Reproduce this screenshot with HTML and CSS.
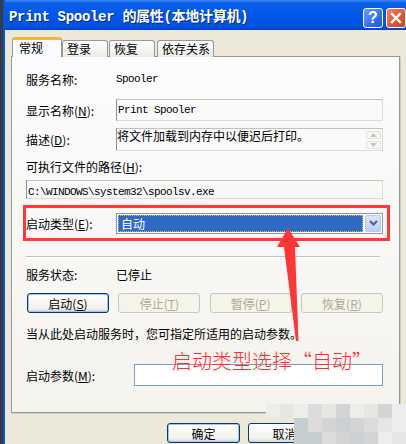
FILE: index.html
```html
<!DOCTYPE html>
<html lang="zh-CN">
<head>
  <meta charset="UTF-8">
  <title>Print Spooler 的属性(本地计算机)</title>
  <link rel="stylesheet" href="styles.css">
</head>
<body>

  <div class="screen">
    <div class="window">
      <div class="titlebar">
        <span class="title">Print Spooler 的属性(本地计算机)</span>
        <div class="tb-buttons">
          <span class="tb-btn help">?</span>
          <span class="tb-btn close">
            <svg width="12" height="12" viewBox="0 0 12 12"><path d="M2 2 L10 10 M10 2 L2 10" stroke="#fff" stroke-width="2.4" stroke-linecap="square"/></svg>
          </span>
        </div>
      </div>

      <div class="dialog">
        <div class="tabs">
          <div class="tab active">常规</div>
          <div class="tab">登录</div>
          <div class="tab">恢复</div>
          <div class="tab tab-wide">依存关系</div>
        </div>

        <div class="panel">
          <div class="row row-name">
            <span class="label">服务名称:</span>
            <span class="mono">Spooler</span>
          </div>
          <div class="row row-display">
            <span class="label">显示名称(<u>N</u>):</span>
            <div class="readonly field-display"><span class="mono">Print Spooler</span></div>
          </div>
          <div class="row row-desc">
            <span class="label">描述(<u>D</u>):</span>
            <div class="readonly field-desc">
              <span class="desc-text">将文件加载到内存中以便迟后打印。</span>
              <div class="spin">
                <span class="spin-btn"><svg width="7" height="4" viewBox="0 0 7 4"><path d="M0 4 L3.5 0 L7 4Z" fill="#c6c6c6"/></svg></span>
                <span class="spin-btn"><svg width="7" height="4" viewBox="0 0 7 4"><path d="M0 0 L3.5 4 L7 0Z" fill="#c6c6c6"/></svg></span>
              </div>
            </div>
          </div>
          <div class="row row-pathlabel">
            <span>可执行文件的路径(<u>H</u>):</span>
          </div>
          <div class="readonly pathbox"><span class="mono">C:\WINDOWS\system32\spoolsv.exe</span></div>

          <div class="row startup">
            <span class="label">启动类型(<u>E</u>):</span>
            <div class="select">
              <div class="select-value">自动</div>
              <div class="select-btn">
                <svg width="9" height="6" viewBox="0 0 9 6"><path d="M1 1 L4.5 4.5 L8 1" fill="none" stroke="#4d6185" stroke-width="2"/></svg>
              </div>
            </div>
          </div>

          <div class="separator"></div>

          <div class="row row-status">
            <span class="label">服务状态:</span>
            <span>已停止</span>
          </div>

          <div class="service-buttons">
            <button class="btn default">启动(<u>S</u>)</button>
            <button class="btn" disabled>停止(<u>T</u>)</button>
            <button class="btn" disabled>暂停(<u>P</u>)</button>
            <button class="btn" disabled>恢复(<u>R</u>)</button>
          </div>

          <div class="row hint">当从此处启动服务时，您可指定所适用的启动参数。</div>

          <div class="row row-param">
            <span class="label label-param">启动参数(<u>M</u>):</span>
            <input class="param-input" type="text">
          </div>
        </div>

        <div class="footer">
          <button class="btn default">确定</button>
          <button class="btn">取消</button>
        </div>
      </div>
    </div>

    <!-- annotation drawn over the screenshot -->
    <svg class="arrow" width="406" height="444" viewBox="0 0 406 444">
      <polygon points="288,228 300,247 295,247 298.5,341 296,341 284,247 277,247" fill="#ff3636"/>
    </svg>
    <div class="note">启动类型选择“自动”</div>

    <div class="mosaic">
      <span class="c1"></span><span class="c2"></span><span class="c1"></span><span class="c3"></span><span class="c2"></span><span class="c4"></span><span class="c1"></span><span class="c2"></span><span class="c4"></span><span class="c1"></span>
      <span class="c0"></span><span class="c0"></span><span class="c5"></span><span class="c3"></span><span class="c4"></span><span class="c6"></span><span class="c4"></span><span class="c3"></span><span class="c2"></span><span class="c1"></span>
      <span class="c0"></span><span class="c0"></span><span class="c5"></span><span class="c5"></span><span class="c3"></span><span class="c4"></span><span class="c6"></span><span class="c4"></span><span class="c1"></span><span class="c2"></span>
    </div>
  </div>

</body>
</html>
```

FILE: styles.css
```css
* {
  box-sizing: border-box;
}
body {
  margin: 0;
  background: #3b3b3b;
  font-family: "Noto Sans CJK SC", "Liberation Sans", sans-serif;
  font-size: 12px;
  color: #000;
}
u {
  text-decoration: underline;
}
.screen {
  position: relative;
  width: 406px;
  height: 444px;
  overflow: hidden;
  padding-left: 3px;
  background: #3b3b3b;
}
.window {
  height: 444px;
  border-left: 2px solid #0553e0;
  background: #ece9d8;
}
.titlebar {
  height: 30px;
  display: flex;
  justify-content: space-between;
  align-items: center;
  padding-left: 4px;
  background: linear-gradient(#3d88f6 0, #0a5fe8 3px, #0058ea 50%, #0052e0 85%, #0046cc 100%);
}
.title {
  font-family: "Liberation Mono", "Noto Sans CJK SC", monospace;
  font-weight: bold;
  font-size: 14px;
  letter-spacing: -0.3px;
  color: #fff;
  text-shadow: 1px 1px 0 #0a2a8a;
}
.tb-buttons {
  display: flex;
  gap: 3px;
  align-self: flex-start;
  margin-top: 8px;
}
.tb-btn {
  width: 20px;
  height: 20px;
  border: 1px solid #fff;
  border-radius: 3px;
  display: flex;
  align-items: center;
  justify-content: center;
  color: #fff;
  font-family: "Liberation Sans", sans-serif;
  font-weight: bold;
  font-size: 16px;
}
.help {
  background: linear-gradient(135deg, #6a9ffa, #2c68ec 70%, #2458d8);
}
.close {
  background: linear-gradient(135deg, #f0876a, #e0522e 60%, #c94420);
}
.dialog {
  padding: 7px 0 0 6px;
}
.tabs {
  display: flex;
  align-items: flex-end;
  height: 20px;
  margin-left: 1px;
  margin-bottom: -1px;
  position: relative;
  z-index: 1;
}
.tab {
  width: 46px;
  height: 17px;
  margin-right: 1px;
  padding-left: 4px;
  line-height: 15px;
  border: 1px solid #919b9c;
  border-bottom: none;
  border-radius: 3px 3px 0 0;
  background: linear-gradient(#ffffff, #ecebe6);
}
.tab-wide {
  width: 57px;
  margin-left: 1px;
}
.tab.active {
  width: 50px;
  height: 20px;
  margin-right: 0;
  padding-left: 6px;
  line-height: 16px;
  border-top: 3px solid #f5b53c;
  background: #fcfcfe;
}
.panel {
  width: 389px;
  height: 357px;
  padding: 0 16px 0 14px;
  border: 1px solid #919b9c;
  background: linear-gradient(#fcfcfe, #f4f3ee);
  box-shadow: 1px 1px 0 #d0cdc0;
}
.row {
  display: flex;
  align-items: center;
}
.label {
  width: 90px;
  flex-shrink: 0;
}
.mono {
  font-family: "Liberation Mono", monospace;
  font-size: 11px;
  letter-spacing: -0.6px;
}
.readonly {
  border: 1px solid #dedcd3;
  border-top-color: #c4c2b8;
  border-left-color: #8e8e8e;
}
.row-name {
  height: 16px;
  margin-top: 14px;
}
.row-display {
  height: 22px;
  margin-top: 12px;
}
.field-display {
  flex: 1;
  height: 22px;
  padding: 1px 0 0 1px;
  line-height: 13px;
}
.row-desc {
  height: 23px;
  margin-top: 7px;
}
.field-desc {
  flex: 1;
  height: 23px;
  display: flex;
  justify-content: space-between;
  padding-right: 1px;
}
.desc-text {
  line-height: 14px;
}
.spin {
  display: flex;
  flex-direction: column;
  gap: 2px;
  padding-top: 2px;
}
.spin-btn {
  width: 15px;
  height: 8px;
  display: flex;
  align-items: center;
  justify-content: center;
  border: 1px solid #e2e2dc;
  border-radius: 2px;
  background: #f6f6f3;
}
.row-pathlabel {
  height: 16px;
  margin-top: 7px;
}
.pathbox {
  height: 19px;
  margin-top: 6px;
  padding-left: 1px;
  line-height: 17px;
}
.startup {
  height: 36px;
  margin: 6px -7px 0 -3px;
  padding-right: 4px;
  border: 3px solid #ff3838;
}
.select {
  flex: 1;
  height: 21px;
  display: flex;
  align-items: center;
  padding: 1px;
  border: 1px solid #7f9db9;
  background: #fff;
}
.select-value {
  flex: 1;
  height: 17px;
  margin-right: 2px;
  padding-left: 2px;
  line-height: 15px;
  color: #fff;
  background: #316ac5;
  border: 1px dotted #e2b657;
}
.select-btn {
  width: 16px;
  height: 17px;
  display: flex;
  align-items: center;
  justify-content: center;
  border: 1px solid #b7c7ee;
  border-radius: 2px;
  background: linear-gradient(#dbe5fc, #bccdf6);
}
.separator {
  height: 2px;
  margin: 15px 3px 0 0;
  border-top: 1px solid #c5c2b2;
  border-bottom: 1px solid #fff;
}
.row-status {
  height: 16px;
  margin-top: 8px;
}
.service-buttons {
  display: flex;
  justify-content: space-between;
  margin-top: 11px;
  padding-left: 1px;
}
.btn {
  width: 82px;
  height: 20px;
  padding: 0;
  font-family: "Noto Sans CJK SC", "Liberation Sans", sans-serif;
  font-size: 12px;
  color: #000;
  border: 1px solid #003c74;
  border-radius: 3px;
  background: linear-gradient(#ffffff, #f2f1ea 80%, #d8d5c8);
}
.btn.default {
  box-shadow: inset 0 0 0 1px #a9c1ec;
}
.btn:disabled {
  color: #aca899;
  border-color: #c9c7ba;
  background: #f5f4ea;
}
.hint {
  height: 16px;
  margin-top: 12px;
}
.row-param {
  height: 22px;
  margin-top: 23px;
}
.label-param {
  width: 108px;
}
.param-input {
  flex: 1;
  height: 22px;
  border: 1px solid #7f9db9;
  background: #fff;
}
.footer {
  display: flex;
  gap: 8px;
  margin-top: 10px;
  padding-left: 156px;
}
.footer .btn {
  width: 73px;
}
.arrow {
  position: absolute;
  left: 0;
  top: 0;
}
.note {
  position: absolute;
  left: 172px;
  top: 349px;
  font-size: 20px;
  line-height: 24px;
  color: #ff2d2d;
  font-weight: 300;
}
.mosaic {
  position: absolute;
  left: 266px;
  top: 404px;
  display: grid;
  grid-template-columns: repeat(10, 14px);
  grid-auto-rows: 14px;
}
.mosaic .c0 { background: transparent; }
.mosaic .c1 { background: #ededec; }
.mosaic .c2 { background: #e6e6e5; }
.mosaic .c3 { background: #dcdcdc; }
.mosaic .c4 { background: #d4d4d4; }
.mosaic .c5 { background: #c6cdd1; }
.mosaic .c6 { background: #cdd0d2; }
```
